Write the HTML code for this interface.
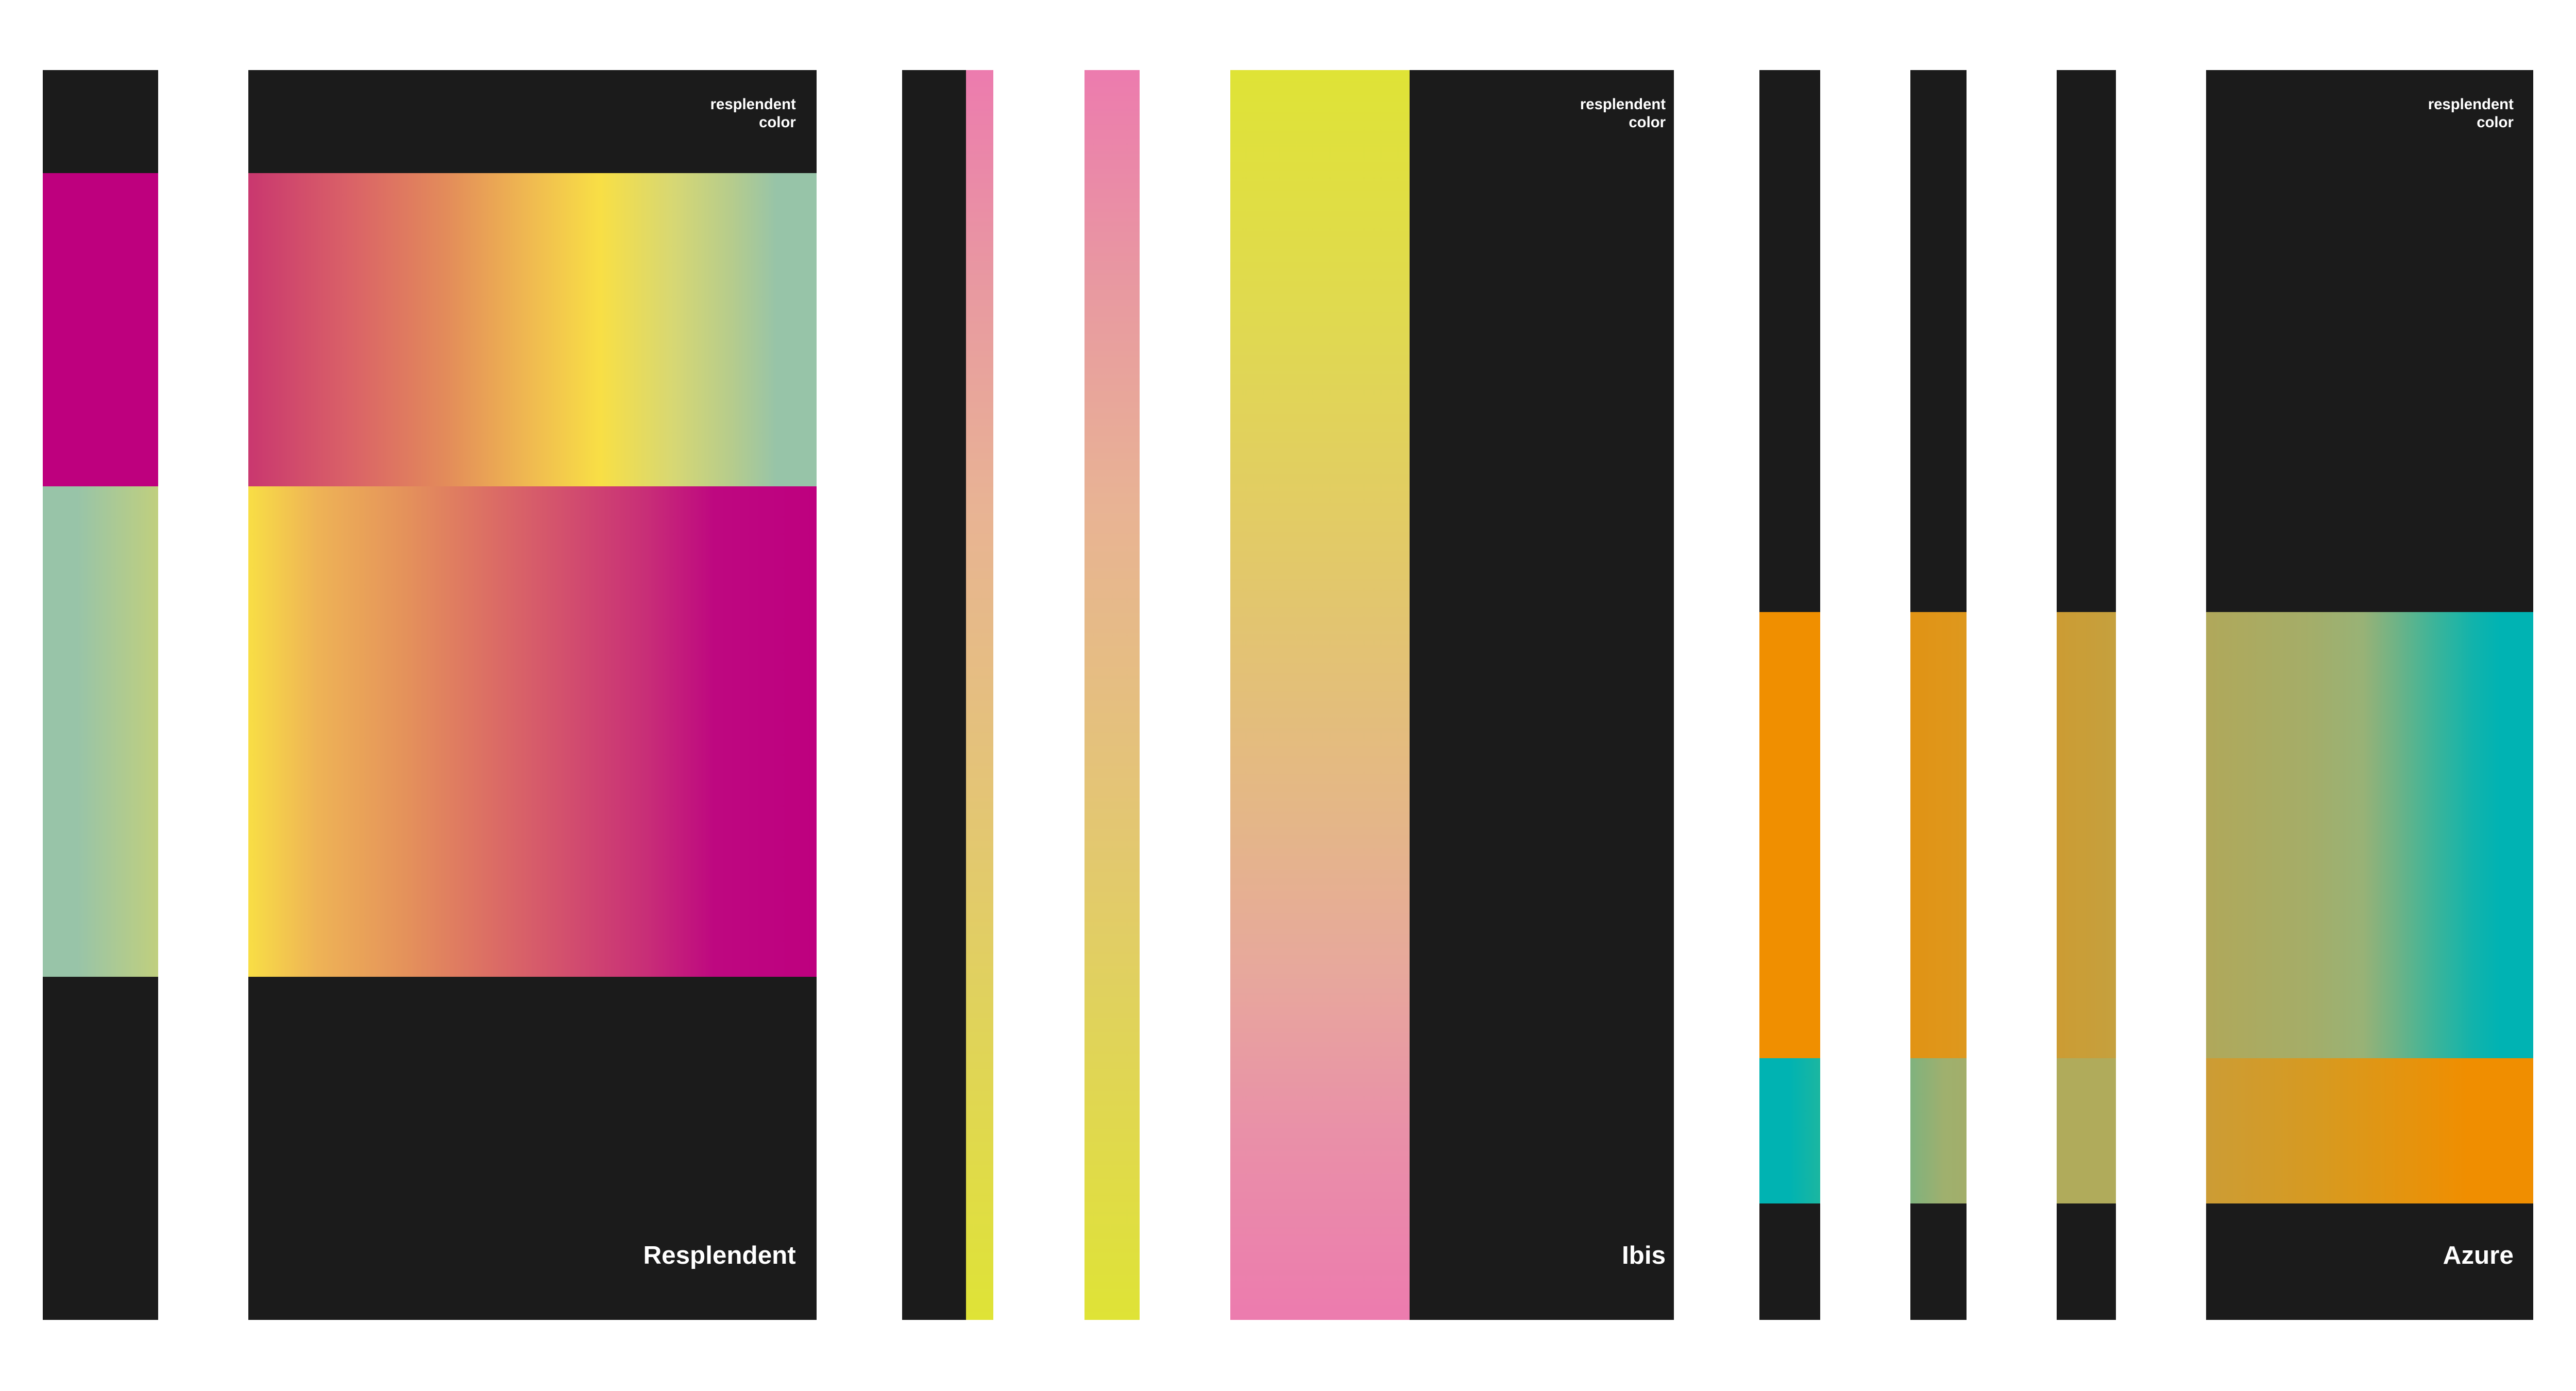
<!DOCTYPE html>
<html><head><meta charset="utf-8"><meta name="viewport" content="width=6480">
<style>
html,body{margin:0;padding:0;background:#fff;width:100vw;height:100vh;overflow:hidden;}
body{position:relative;font-family:"Liberation Sans",sans-serif;}
.b{position:absolute;left:calc(var(--x)*100vw/6480);top:calc(var(--y)*100vh/2700);width:calc(var(--w)*100vw/6480);height:calc(var(--h)*100vh/2700);}
.k{background:#1b1b1b;}
.t{position:absolute;color:#fff;font-weight:bold;text-align:right;white-space:nowrap;right:calc(var(--r)*100vw/6480);top:calc(var(--y)*100vh/2700);}
.t1{font-size:calc(38*100vw/6480);line-height:calc(45*100vw/6480);}
.t2{font-size:calc(64*100vw/6480);line-height:calc(64*100vw/6480);}
</style></head><body>

<div class="b k" style="--x:107;--y:136;--w:291;--h:2426"></div>
<div class="b" style="--x:107;--y:336;--w:291;--h:608;background:#be007e"></div>
<div class="b" style="--x:107;--y:944;--w:291;--h:952;background:linear-gradient(90deg,#98c4a8 0%,#98c4a8 30%,#c0cf7e 100%)"></div>

<div class="b k" style="--x:625;--y:136;--w:1429;--h:2426"></div>
<div class="b" style="--x:625;--y:336;--w:1429;--h:608;background:linear-gradient(90deg,#c9376f 0%,#da6267 18%,#e38c5a 35%,#f0bb50 50%,#f8df45 62%,#d6d774 75%,#b6cc8c 85%,#97c4a8 93%,#97c4a8 100%)"></div>
<div class="b" style="--x:625;--y:944;--w:1429;--h:952;background:linear-gradient(90deg,#f8de45 0%,#eeb356 12%,#e4915b 28%,#dc6f64 42%,#d3516d 55%,#c82e77 70%,#be0880 82%,#be007f 100%)"></div>
<div class="t t1" style="--r:4478;--y:186">resplendent<br>color</div>
<div class="t t2" style="--r:4478;--y:2412">Resplendent</div>

<div class="b k" style="--x:2269;--y:136;--w:161;--h:2426"></div>
<div class="b" style="--x:2430;--y:136;--w:69;--h:2426;background:linear-gradient(180deg,#ec7bae 0%,#e89aa0 18%,#e8b394 35%,#e4c27a 55%,#e0d25c 75%,#dfe336 100%)"></div>

<div class="b" style="--x:2728;--y:136;--w:139;--h:2426;background:linear-gradient(180deg,#ec7bae 0%,#e89aa0 18%,#e8b394 35%,#e4c27a 55%,#e0d25c 75%,#dfe336 100%)"></div>

<div class="b k" style="--x:3095;--y:136;--w:1116;--h:2426"></div>
<div class="b" style="--x:3095;--y:136;--w:451;--h:2426;background:linear-gradient(180deg,#dfe336 0%,#e0d950 20%,#e2c86a 40%,#e4b688 60%,#e7a89c 72%,#e990a8 85%,#ec7bae 100%)"></div>
<div class="t t1" style="--r:2290;--y:186">resplendent<br>color</div>
<div class="t t2" style="--r:2290;--y:2412">Ibis</div>

<div class="b k" style="--x:4426;--y:136;--w:153;--h:2426"></div>
<div class="b" style="--x:4426;--y:1188;--w:153;--h:866;background:#f08f00"></div>
<div class="b" style="--x:4426;--y:2054;--w:153;--h:282;background:linear-gradient(90deg,#00b3b2 0%,#00b3b2 50%,#1cb6a0 100%)"></div>

<div class="b k" style="--x:4806;--y:136;--w:141;--h:2426"></div>
<div class="b" style="--x:4806;--y:1188;--w:141;--h:866;background:linear-gradient(90deg,#e19314,#de981e)"></div>
<div class="b" style="--x:4806;--y:2054;--w:141;--h:282;background:linear-gradient(90deg,#7fb27e,#9fb06e 60%,#a2ae6a)"></div>

<div class="b k" style="--x:5174;--y:136;--w:149;--h:2426"></div>
<div class="b" style="--x:5174;--y:1188;--w:149;--h:866;background:linear-gradient(90deg,#cc9c33,#c5a03e)"></div>
<div class="b" style="--x:5174;--y:2054;--w:149;--h:282;background:#b0ab5b"></div>

<div class="b k" style="--x:5550;--y:136;--w:823;--h:2426"></div>
<div class="b" style="--x:5550;--y:1188;--w:823;--h:866;background:linear-gradient(90deg,#b0a85a 0%,#a5ad68 30%,#98b276 48%,#6fb386 58%,#3bb49a 70%,#10b3ac 82%,#00b3b3 90%,#00b3b3 100%)"></div>
<div class="b" style="--x:5550;--y:2054;--w:823;--h:282;background:linear-gradient(90deg,#cc9c35 0%,#d79a20 35%,#e4940f 60%,#f08e00 80%,#f08e00 100%)"></div>
<div class="t t1" style="--r:157;--y:186">resplendent<br>color</div>
<div class="t t2" style="--r:157;--y:2412">Azure</div>

</body></html>
